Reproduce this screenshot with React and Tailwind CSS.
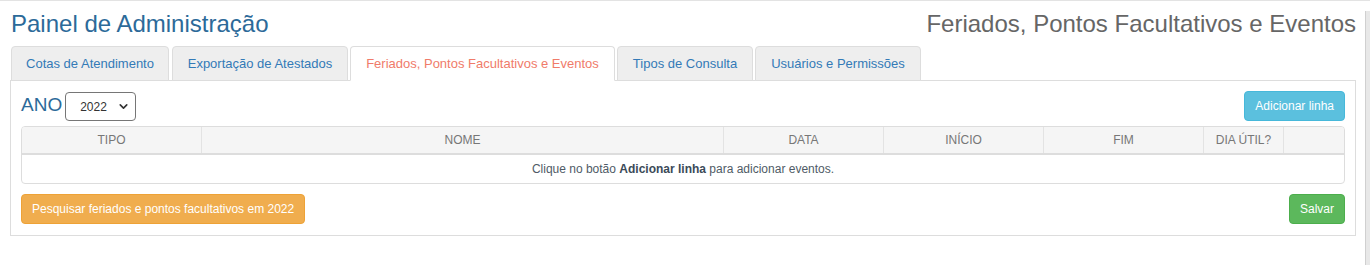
import { ChevronDown } from "lucide-react";

const tabs = [
  { label: "Cotas de Atendimento", w: "w-[158px] mr-[3px]" },
  { label: "Exportação de Atestados", w: "w-[176px] mr-[2px]" },
  { label: "Feriados, Pontos Facultativos e Eventos", w: "w-[265px] mr-[2px]", active: true },
  { label: "Tipos de Consulta", w: "w-[136px] mr-[2px]" },
  { label: "Usuários e Permissões", w: "w-[166px]" },
];

const cols = ["TIPO", "NOME", "DATA", "INÍCIO", "FIM", "DIA ÚTIL?", ""];

export default function App() {
  return (
    <div className="flex w-[1370px] h-[265px] bg-white border-t border-[#e3e3e3] font-['Liberation_Sans',Arial,sans-serif]">
      <div className="flex-1 pl-[10px] pr-[9px]">
        {/* cabeçalho */}
        <div className="flex items-center justify-between pt-[7px] pl-px h-[38px]">
          <h1 className="text-[24px] leading-none text-[#2c6a99]">Painel de Administração</h1>
          <h2 className="text-[24px] leading-none text-[#666]">Feriados, Pontos Facultativos e Eventos</h2>
        </div>

        {/* abas */}
        <div className="flex mt-[7px] pl-px relative z-10">
          {tabs.map((t) => (
            <div
              key={t.label}
              className={`${t.w} h-[35px] flex items-center justify-center text-[13px] rounded-t-[4px] border -mb-px ${
                t.active
                  ? "bg-white border-[#ddd] border-b-white text-[#f07b6a]"
                  : "bg-[#eee] border-[#ddd] text-[#337ab7]"
              }`}
            >
              {t.label}
            </div>
          ))}
        </div>

        {/* painel */}
        <div className="border border-[#ddd] px-[10px] pt-[10px] pb-[11px]">
          <div className="flex items-center justify-between">
            <div className="flex items-center gap-[3px] pt-px">
              <span className="text-[19px] text-[#2c6a99] leading-none -mt-[4px]">ANO</span>
              <div className="w-[71px] h-[29px] border border-[#767676] rounded-[4px] flex items-center justify-between pl-[14px] pr-[5px] text-[12px] text-[#333]">
                <span>2022</span>
                <ChevronDown size={13} strokeWidth={3} className="text-[#333]" />
              </div>
            </div>
            <button className="h-[30px] px-[10px] bg-[#5bc0de] border border-[#46b8da] rounded-[4px] text-white text-[12px]">
              Adicionar linha
            </button>
          </div>

          {/* tabela */}
          <div className="mt-[5px] border border-[#ddd] rounded-[4px] overflow-hidden">
            <div className="grid grid-cols-[180px_522px_160px_160px_160px_80px_1fr] bg-[#f5f5f5] border-b-2 border-[#ddd] h-[28px]">
              {cols.map((c, i) => (
                <div
                  key={i}
                  className={`flex items-center justify-center text-[12px] text-[#777] ${
                    i < cols.length - 1 ? "border-r border-[#e3e3e3]" : ""
                  }`}
                >
                  {c}
                </div>
              ))}
            </div>
            <div className="h-[28px] flex items-center justify-center text-[12px] text-[#4f5b66]">
              Clique no botão&nbsp;<b className="text-[#3b4a58]">Adicionar linha</b>&nbsp;para adicionar eventos.
            </div>
          </div>

          <div className="flex items-center justify-between mt-[10px]">
            <button className="h-[30px] px-[10px] bg-[#f0ad4e] border border-[#eea236] rounded-[4px] text-white text-[12px]">
              Pesquisar feriados e pontos facultativos em 2022
            </button>
            <button className="h-[30px] px-[10px] bg-[#5cb85c] border border-[#4cae4c] rounded-[4px] text-white text-[12px]">
              Salvar
            </button>
          </div>
        </div>
      </div>
      <div className="w-[5px] mt-[10px] bg-[#e8e8e8] border-l border-[#d0d0d0]" />
    </div>
  );
}
